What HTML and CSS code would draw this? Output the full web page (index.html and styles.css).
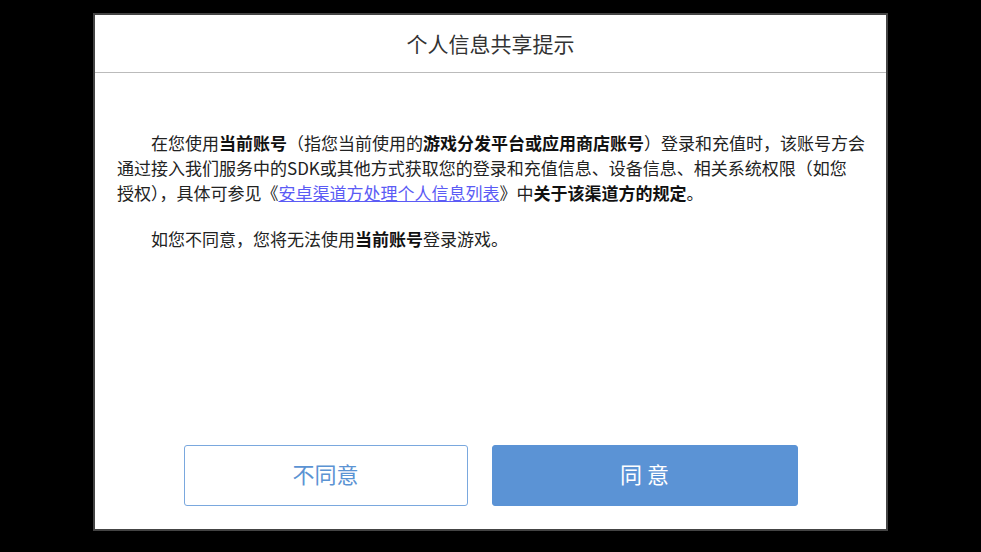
FILE: index.html
```html
<!DOCTYPE html>
<html lang="zh-CN">
<head>
    <meta charset="UTF-8">
    <meta name="viewport" content="width=device-width, initial-scale=1.0">
    <title>个人信息共享提示</title>
    <link rel="stylesheet" href="styles.css">
</head>
<body>
    <div class="dialog">
        <div class="dialog-header">个人信息共享提示</div>
        <div class="dialog-body">
            <p>在您使用<b>当前账号</b>（指您当前使用的<b>游戏分发平台或应用商店账号</b>）登录和充值时，该账号方会通过接入我们服务中的SDK或其他方式获取您的登录和充值信息、设备信息、相关系统权限（如您<span class="nowrap">授权）</span>，具体可参见《<a href="#">安卓渠道方处理个人信息列表</a>》中<b>关于该渠道方的规定</b>。</p>
            <p>如您不同意，您将无法使用<b>当前账号</b>登录游戏。</p>
        </div>
        <div class="dialog-footer">
            <button class="btn btn-cancel">不同意</button>
            <button class="btn btn-ok">同 意</button>
        </div>
    </div>
</body>
</html>
```

FILE: styles.css
```css
body {
    margin: 0;
    padding: 0;
    background-color: #000;
    font-family: "Noto Sans CJK SC", "Noto Sans", sans-serif;
    color: #222;
}
/* Dialog */
.dialog {
    width: 791px;
    height: 514px;
    margin: 13px auto 0;
    background-color: #fff;
    border: 2px solid #444;
    display: flex;
    flex-direction: column;
}
.dialog-header {
    height: 57px;
    line-height: 57px;
    text-align: center;
    font-size: 21px;
    color: #333;
    border-bottom: 1px solid #bbb;
}
.dialog-body {
    flex: 1;
    padding: 57px 20px 0 22px;
}
.dialog-body p {
    margin: 0 0 21px;
    font-size: 17px;
    line-height: 25px;
    text-indent: 2em;
}
.dialog-body b {
    font-weight: bold;
    color: #111;
}
.dialog-body a {
    color: #5b5bf5;
    text-decoration: underline;
}
.nowrap {
    white-space: nowrap;
}
/* Buttons */
.dialog-footer {
    display: flex;
    justify-content: center;
    gap: 24px;
    padding-bottom: 23px;
}
.btn {
    height: 61px;
    padding: 0 0 5px;
    border-radius: 3px;
    font-family: inherit;
    font-size: 22px;
    cursor: pointer;
}
.btn-cancel {
    width: 284px;
    background-color: #fff;
    border: 1px solid #7aa8de;
    color: #5b93d3;
}
.btn-ok {
    width: 306px;
    background-color: #5b93d5;
    border: 1px solid #5b93d5;
    color: #fff;
}
```
